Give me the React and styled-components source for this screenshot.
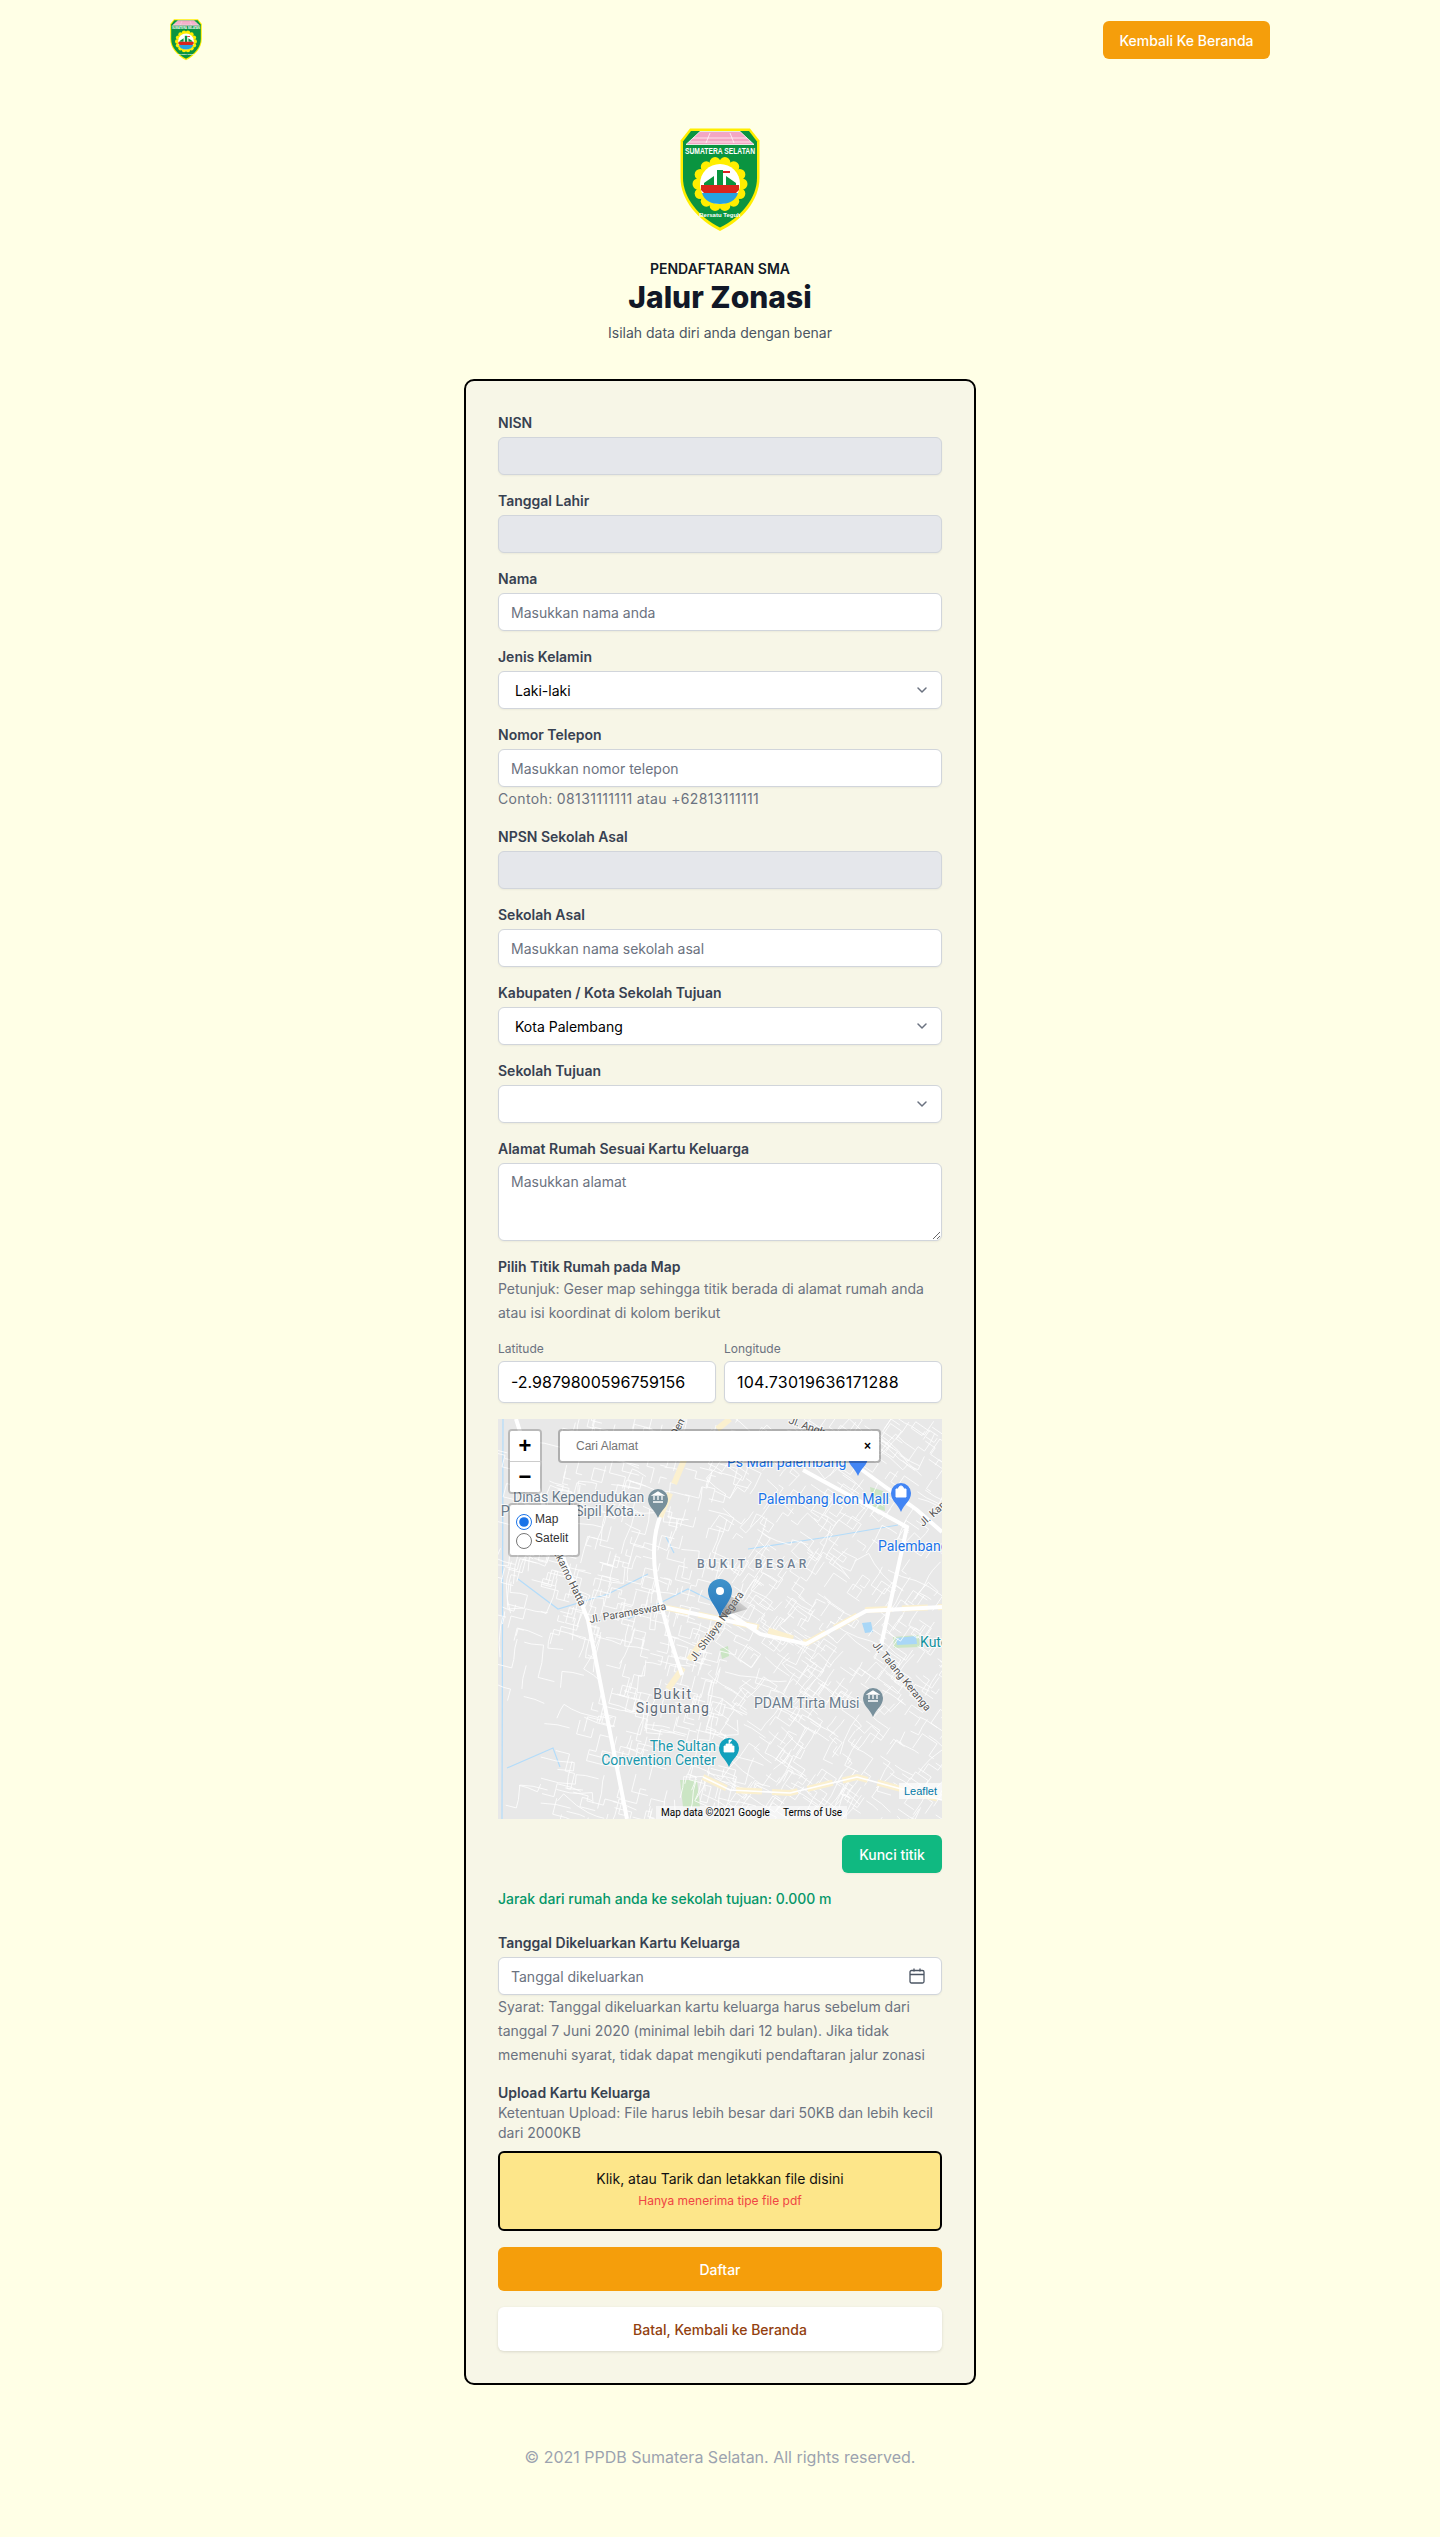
import React from 'react'
import styled, { createGlobalStyle } from 'styled-components'

const GlobalStyle = createGlobalStyle`
  * { box-sizing: border-box; }
  body {
    margin: 0;
    background: #ffffe6;
    font-family: Inter, "Noto Sans", sans-serif;
    color: #111827;
  }
  input, select, textarea, button { font-family: inherit; }
`

const Page = styled.div`
  min-height: 2537px;
  display: flex;
  flex-direction: column;
  align-items: center;
`

const Nav = styled.header`
  width: 1100px;
  height: 80px;
  display: flex;
  align-items: center;
  justify-content: space-between;
`

const NavButton = styled.a`
  width: 167px;
  height: 38px;
  display: flex;
  align-items: center;
  justify-content: center;
  border-radius: 6px;
  background: #f59e0b;
  color: #fff;
  font-size: 14px;
  font-weight: 500;
`

const Hero = styled.div`
  padding-top: 48px;
  display: flex;
  flex-direction: column;
  align-items: center;
  text-align: center;
`

const Eyebrow = styled.div`
  margin-top: 28px;
  font-size: 14px;
  line-height: 20px;
  font-weight: 600;
  color: #111827;
`

const Title = styled.h1`
  margin: 0;
  font-size: 30px;
  line-height: 36px;
  font-weight: 800;
  color: #111827;
`

const Subtitle = styled.p`
  margin: 8px 0 0;
  font-size: 14px;
  line-height: 20px;
  color: #4b5563;
`

const Card = styled.form`
  width: 512px;
  margin-top: 36px;
  padding: 32px;
  display: flex;
  flex-direction: column;
  gap: 16px;
  background: #f7f6e7;
  border: 2px solid #000;
  border-radius: 10px;
`

const Field = styled.div`
  display: flex;
  flex-direction: column;
`

const Label = styled.label`
  margin-bottom: ${(p) => (p.$flush ? '0' : '4px')};
  font-size: 14px;
  line-height: 20px;
  font-weight: 600;
  color: #374151;
`

const Hint = styled.p`
  margin: 0;
  font-size: 14px;
  line-height: ${(p) => (p.$tight ? '20px' : '24px')};
  letter-spacing: ${(p) => (p.$digits ? '0.36px' : 'normal')};
  color: #6b7280;
`

const Input = styled.input`
  width: 100%;
  height: ${(p) => (p.$large ? '42px' : '38px')};
  padding: 0 12px;
  background: ${(p) => (p.disabled ? '#e5e7eb' : '#fff')};
  border: 1px solid #d1d5db;
  border-radius: 6px;
  box-shadow: 0 1px 2px rgba(0, 0, 0, 0.05);
  font-size: ${(p) => (p.$large ? '16px' : '14px')};
  letter-spacing: ${(p) => (p.$spread ? '0.25px' : 'normal')};
  color: #000;
  &::placeholder { color: #6b7280; opacity: 1; }
`

const TextArea = styled.textarea`
  display: block;
  width: 100%;
  height: 78px;
  padding: 8px 12px;
  background: #fff;
  border: 1px solid #d1d5db;
  border-radius: 6px;
  box-shadow: 0 1px 2px rgba(0, 0, 0, 0.05);
  font-size: 14px;
  line-height: 20px;
  &::placeholder { color: #6b7280; opacity: 1; }
`

const SelectWrap = styled.div`
  position: relative;
  svg {
    position: absolute;
    top: 9px;
    right: 10px;
    pointer-events: none;
  }
`

const DateWrap = styled(SelectWrap)`
  svg { right: 17px; top: 11px; }
`

const Select = styled.select`
  width: 100%;
  height: 38px;
  padding: 0 16px;
  appearance: none;
  background: #fff;
  border: 1px solid #d1d5db;
  border-radius: 6px;
  box-shadow: 0 1px 2px rgba(0, 0, 0, 0.05);
  font-size: 14px;
  color: #000;
`

const CoordGrid = styled.div`
  margin-top: 16px;
  display: grid;
  grid-template-columns: 1fr 1fr;
  gap: 8px;
`

const SmallLabel = styled.label`
  display: block;
  margin-bottom: 4px;
  font-size: 12px;
  line-height: 16px;
  color: #6b7280;
`

const MapFrame = styled.div`
  position: relative;
  height: 400px;
  overflow: hidden;
  background: #e8e8e8;
  svg { display: block; }
`

const ZoomBar = styled.div`
  position: absolute;
  top: 10px;
  left: 10px;
  width: 34px;
  border: 2px solid rgba(0, 0, 0, 0.2);
  border-radius: 4px;
  background-clip: padding-box;
`

const ZoomButton = styled.a`
  display: block;
  height: ${(p) => (p.$first ? '31px' : '30px')};
  background: #fff;
  border-bottom: ${(p) => (p.$first ? '1px solid #ccc' : 'none')};
  border-radius: ${(p) => (p.$first ? '2px 2px 0 0' : '0 0 2px 2px')};
  text-align: center;
  font: bold 22px/30px "Liberation Sans", sans-serif;
  color: #000;
`

const SearchBox = styled.div`
  position: absolute;
  top: 10px;
  left: 60px;
  width: 323px;
  height: 34px;
  padding: 0 8px 0 16px;
  display: flex;
  align-items: center;
  justify-content: space-between;
  background: #fff;
  border: 2px solid rgba(0, 0, 0, 0.25);
  border-radius: 4px;
  background-clip: padding-box;
  font: 12px "Liberation Sans", sans-serif;
  color: #757575;
`

const SearchClear = styled.span`
  font-weight: bold;
  font-size: 12px;
  color: #000;
`

const LayerBox = styled.div`
  position: absolute;
  top: 84px;
  left: 10px;
  width: 72px;
  height: 54px;
  padding: 9px 0 0 6px;
  display: flex;
  flex-direction: column;
  gap: 3px;
  background: #fff;
  border: 2px solid rgba(0, 0, 0, 0.2);
  border-radius: 4px;
  background-clip: padding-box;
  font: 12px/14px "Liberation Sans", sans-serif;
  color: #333;
`

const LayerOption = styled.label`
  height: 16px;
  display: flex;
  align-items: flex-start;
  gap: 3px;
  input {
    width: 16px;
    height: 16px;
    margin: 0;
    accent-color: #1a73e8;
  }
  span { margin-top: -2px; }
`

const Attribution = styled.div`
  position: absolute;
  right: 0;
  bottom: 20px;
  height: 16px;
  padding: 0 5px;
  background: rgba(255, 255, 255, 0.7);
  font: 11px/16px "Liberation Sans", sans-serif;
  color: #0078a8;
`

const MapCredit = styled.div`
  position: absolute;
  left: 158px;
  bottom: 0;
  width: 191px;
  height: 13px;
  padding-left: 5px;
  display: flex;
  gap: 13px;
  background: rgba(255, 255, 255, 0.55);
  font: 10px/13px Roboto, sans-serif;
  color: #000;
`

const ButtonRow = styled.div`
  display: flex;
  justify-content: flex-end;
`

const LockButton = styled.button`
  width: 100px;
  height: 38px;
  border: none;
  border-radius: 6px;
  background: #10b981;
  box-shadow: 0 1px 2px rgba(0, 0, 0, 0.05);
  color: #fff;
  font-size: 14px;
  font-weight: 500;
`

const Distance = styled.p`
  margin: 0 0 8px;
  font-size: 14px;
  line-height: 20px;
  font-weight: 500;
  color: #059669;
`

const DropZone = styled.div`
  height: 80px;
  margin-top: 8px;
  padding-top: 16px;
  display: flex;
  flex-direction: column;
  align-items: center;
  gap: 4px;
  background: #fde68a;
  border: 2px solid #000;
  border-radius: 6px;
`

const DropTitle = styled.span`
  font-size: 14px;
  line-height: 20px;
  color: #111;
`

const DropNote = styled.span`
  font-size: 12px;
  line-height: 16px;
  color: #ef4444;
`

const ActionButton = styled.button`
  height: 44px;
  border: none;
  border-radius: 6px;
  background: ${(p) => (p.$primary ? '#f59e0b' : '#fff')};
  color: ${(p) => (p.$primary ? '#fff' : '#92400e')};
  box-shadow: ${(p) => (p.$primary ? 'none' : '0 1px 3px rgba(0, 0, 0, 0.12)')};
  font-size: 14px;
  font-weight: 500;
`

const Footer = styled.footer`
  margin-top: 60px;
  font-size: 16px;
  line-height: 24px;
  color: #9ca3af;
`

const Chevron = () => (
  <svg width="20" height="20" viewBox="0 0 20 20" fill="none" stroke="#6b7280" strokeWidth="1.5" strokeLinecap="round" strokeLinejoin="round">
    <path d="M6 8l4 4 4-4" />
  </svg>
)

const CalendarIcon = () => (
  <svg width="16" height="16" viewBox="0 0 16 16" fill="none" stroke="#4b5563" strokeWidth="1.3">
    <rect x="1" y="2.500" width="14" height="12.500" rx="1.500" />
    <path d="M1 6.500h14M5 .5v3M11 .5v3" />
  </svg>
)

const Logo = ({ size }) => {
  const teeth = Array.from({ length: 14 }, (_, i) => {
    const a = (i / 14) * Math.PI * 2
    return <circle key={i} cx={40 + Math.cos(a) * 22} cy={56 + Math.sin(a) * 22} r="5.500" fill="#ffee00" />
  })
  return (
    <svg width={size} height={(size * 103) / 80} viewBox="0 0 80 103">
      <path d="M10 .5h60l9.500 12V50c0 22-17 42-39.500 53C18 92 .5 72 .5 50V12.500z" fill="#ffee00" />
      <path d="M11 3h58l8 10.500V50c0 20-16 39-37 49.500C19 89 3 70 3 50V13.500z" fill="#0a9440" />
      <path d="M20 3.500h40l14 13H6z" fill="#f3a6c4" stroke="#fff" strokeWidth=".8" />
      <path d="M13 10h54M9 14h62M30 5l-4 10M50 5l4 10" stroke="#fff" strokeWidth=".7" />
      <text x="5" y="26" textLength="70" lengthAdjust="spacingAndGlyphs" fontFamily="Liberation Sans, sans-serif" fontSize="9" fontWeight="700" fill="#fff">SUMATERA SELATAN</text>
      {teeth}
      <circle cx="40" cy="56" r="20" fill="#fff" />
      <path d="M24 55l10-7v9H24zM56 55l-10-7v9h10z" fill="#0a9440" />
      <rect x="37" y="42" width="6" height="24" fill="#0a9440" />
      <path d="M43 43h7v2h-7z" fill="#d22" />
      <path d="M21 57h38v5l-3 3H24l-3-3z" fill="#d9261c" />
      <path d="M22 65h36c-2 8-10 11-18 11s-16-3-18-11z" fill="#27a3df" />
      <text x="40" y="89" textAnchor="middle" fontFamily="Liberation Sans, sans-serif" fontSize="6" fontWeight="700" fill="#fff">Bersatu Teguh</text>
    </svg>
  )
}

// small side streets, seeded so the picture stays the same on every render
const buildStreets = () => {
  let seed = 4217
  const rnd = () => {
    seed = (seed * 16807) % 2147483647
    return seed / 2147483647
  }
  let d = ''
  for (let i = 0; i < 760; i++) {
    let x = rnd() * 444
    let y = rnd() * 400
    if (x < 90 && y > 220 && rnd() > 0.35) continue
    let a = Math.floor(rnd() * 4) * (Math.PI / 2) + 0.35 + (x > 230 ? 0.25 : -0.1)
    d += `M${x.toFixed(1)} ${y.toFixed(1)}`
    const steps = 2 + Math.floor(rnd() * 4)
    for (let s = 0; s < steps; s++) {
      const len = 5 + rnd() * 13
      x += Math.cos(a) * len
      y += Math.sin(a) * len
      d += `L${x.toFixed(1)} ${y.toFixed(1)}`
      a += (rnd() > 0.5 ? 1 : -1) * (Math.PI / 2) * (rnd() > 0.35 ? 1 : 0.1)
    }
  }
  return d
}

const Pin = ({ x, tip, color, children }) => (
  <g transform={`translate(${x} ${tip - 29})`}>
    <path d="M0 29C-3 21-10 18-10 10a10 10 0 0 1 20 0c0 8-7 11-10 19z" fill={color} />
    {children}
  </g>
)

const MapLabel = styled.text`
  font-family: Roboto, sans-serif;
  font-size: ${(p) => p.$size || 14}px;
  font-weight: ${(p) => p.$weight || 400};
  letter-spacing: ${(p) => p.$spacing || 0}px;
  fill: ${(p) => p.$color || '#6b7c8c'};
  paint-order: stroke;
  stroke: rgba(255, 255, 255, 0.75);
  stroke-width: 2px;
`

const MapDrawing = () => {
  const streets = React.useMemo(buildStreets, [])
  return (
    <svg width="444" height="400" viewBox="0 0 444 400">
      <defs>
        <linearGradient id="pinBlue" x1="0" y1="0" x2="0" y2="1">
          <stop offset="0" stopColor="#3f93cb" />
          <stop offset="1" stopColor="#2a78bc" />
        </linearGradient>
        <linearGradient id="pinShade" x1="0" y1="1" x2="1" y2="0">
          <stop offset="0" stopColor="#555" stopOpacity=".75" />
          <stop offset="1" stopColor="#888" stopOpacity="0" />
        </linearGradient>
      </defs>
      <rect width="444" height="400" fill="#e8e8e8" />
      <path d="M182 361h17l3 27h-17zM372 68l13 4 2 20-12-4zM222 230l8-3 1 10-7 3zM395 218l26-2 1 12-26 1z" fill="#cbe5c4" />
      <path d="M364 204l9-1 2 10-8 1zM398 219l20-2 1 8-20 1z" fill="#a9d7f7" />
      <path d="M5 0l-1 400M9 349l46-20 7 19M20 160l40 30 50-15 40-20M130 200l60-30 40 20M250 130l80-12 70-12M168 118l8 16" stroke="#b3dcfa" strokeWidth="1.200" fill="none" />
      <path d={streets} stroke="#fff" strokeWidth=".9" fill="none" opacity=".9" />
      <path d="M165 188l94 20 50 16 60-33 75-3M205 358l27 13 60 3 67-16 85 23M162 98l27-64 43-34M170 270l30-42 30-34" stroke="#fbf0cf" strokeWidth="6" strokeDasharray="26 10" fill="none" />
      <path d="M18 0l32 100 40 101 39 199M162 98c-12 32-7 72 22 158M305 51l104 57-27 123M360 48l59 43 25 22M232 195l30 20 46 10 60-33 76-4M165 188l94 20" stroke="#fff" strokeWidth="4" fill="none" />
      <path d="M205 358l27 13 60 3 67-16 85 23" stroke="#fff" strokeWidth="1.600" fill="none" />

      <MapLabel x="15" y="83">Dinas Kependudukan</MapLabel>
      <MapLabel x="147" y="97" textAnchor="end">dan Pencatatan Sipil Kota...</MapLabel>
      <Pin x={160} tip={99} color="#78909c">
        <path d="M-5 13h10M-4 11V7M0 11V7M4 11V7M-5 6l5-3 5 3z" stroke="#fff" strokeWidth="1.300" fill="#fff" />
      </Pin>
      <MapLabel x="229" y="48" $color="#1a73e8">Ps Mall palembang</MapLabel>
      <Pin x={360} tip={57} color="#4285f4" />
      <MapLabel x="260" y="85" $color="#1a73e8">Palembang Icon Mall</MapLabel>
      <Pin x={403} tip={93} color="#4285f4">
        <path d="M-5 6h10v8H-5zM-2.500 6c0-4 5-4 5 0" fill="#fff" stroke="#fff" strokeWidth="1" />
      </Pin>
      <MapLabel x="380" y="132" $color="#1a73e8">Palembang</MapLabel>
      <MapLabel x="199" y="149" $size={12} $weight={500} $spacing={3.6} $color="#6f7f92">BUKIT BESAR</MapLabel>
      <MapLabel $size={10.500} $color="#555" transform="translate(92 204) rotate(-10)">Jl. Parameswara</MapLabel>
      <MapLabel $size={10.500} $color="#555" transform="translate(44 110) rotate(64)">Jl. Soekarno Hatta</MapLabel>
      <MapLabel $size={10.500} $color="#555" transform="translate(197 243) rotate(-54)">Jl. Shijaya Negara</MapLabel>
      <MapLabel $size={10.500} $color="#555" transform="translate(374 226) rotate(51)">Jl. Talang Keranga</MapLabel>
      <MapLabel $size={10.500} $color="#555" transform="translate(172 30) rotate(-62)">Jl. Demang</MapLabel>
      <MapLabel $size={10.500} $color="#555" transform="translate(425 108) rotate(-42)">Jl. Kap</MapLabel>
      <MapLabel $size={10.500} $color="#555" transform="translate(290 4) rotate(20)">Jl. Angkatan</MapLabel>
      <MapLabel x="422" y="228" $color="#12939e">Kuto</MapLabel>
      <MapLabel x="175" y="280" textAnchor="middle" $spacing={1.6} $color="#5f6b78">Bukit</MapLabel>
      <MapLabel x="175" y="294" textAnchor="middle" $spacing={1.3} $color="#5f6b78">Siguntang</MapLabel>
      <MapLabel x="256" y="289">PDAM Tirta Musi</MapLabel>
      <Pin x={375} tip={298} color="#78909c">
        <path d="M-5 13h10M-4 11V7M0 11V7M4 11V7M-5 6l5-3 5 3z" stroke="#fff" strokeWidth="1.300" fill="#fff" />
      </Pin>
      <MapLabel x="218" y="332" textAnchor="end" $color="#1a98ac">The Sultan</MapLabel>
      <MapLabel x="218" y="346" textAnchor="end" $color="#1a98ac">Convention Center</MapLabel>
      <Pin x={231} tip={348} color="#12a0bc">
        <path d="M-5 14V8h2V6h6v2h2v6zM0 6V2h3" fill="#fff" stroke="#fff" strokeWidth=".8" />
      </Pin>

      <path d="M222 198l10-22 18 14z" fill="url(#pinShade)" />
      <path d="M222 198c-3-10-12-17-12-26a12 12 0 0 1 24 0c0 9-9 16-12 26z" fill="url(#pinBlue)" />
      <circle cx="222" cy="172" r="4" fill="#fff" />
    </svg>
  )
}

const TextField = ({ label, placeholder, disabled, hint }) => (
  <Field>
    <Label>{label}</Label>
    <Input disabled={disabled} placeholder={placeholder} />
    {hint && <Hint $digits>{hint}</Hint>}
  </Field>
)

const SelectField = ({ label, value }) => (
  <Field>
    <Label>{label}</Label>
    <SelectWrap>
      <Select defaultValue={value}>
        <option value={value}>{value}</option>
      </Select>
      <Chevron />
    </SelectWrap>
  </Field>
)

const App = () => {
  return (
    <Page>
      <GlobalStyle />
      <Nav>
        <Logo size={32} />
        <NavButton>Kembali Ke Beranda</NavButton>
      </Nav>

      <Hero>
        <Logo size={80} />
        <Eyebrow>PENDAFTARAN SMA</Eyebrow>
        <Title>Jalur Zonasi</Title>
        <Subtitle>Isilah data diri anda dengan benar</Subtitle>
      </Hero>

      <Card>
        <TextField label="NISN" disabled />
        <TextField label="Tanggal Lahir" disabled />
        <TextField label="Nama" placeholder="Masukkan nama anda" />
        <SelectField label="Jenis Kelamin" value="Laki-laki" />
        <TextField label="Nomor Telepon" placeholder="Masukkan nomor telepon" hint="Contoh: 08131111111 atau +62813111111" />
        <TextField label="NPSN Sekolah Asal" disabled />
        <TextField label="Sekolah Asal" placeholder="Masukkan nama sekolah asal" />
        <SelectField label="Kabupaten / Kota Sekolah Tujuan" value="Kota Palembang" />
        <SelectField label="Sekolah Tujuan" value="" />
        <Field>
          <Label>Alamat Rumah Sesuai Kartu Keluarga</Label>
          <TextArea placeholder="Masukkan alamat" />
        </Field>

        <Field>
          <Label $flush>Pilih Titik Rumah pada Map</Label>
          <Hint>Petunjuk: Geser map sehingga titik berada di alamat rumah anda atau isi koordinat di kolom berikut</Hint>
          <CoordGrid>
            <div>
              <SmallLabel>Latitude</SmallLabel>
              <Input $large defaultValue="-2.9879800596759156" />
            </div>
            <div>
              <SmallLabel>Longitude</SmallLabel>
              <Input $large $spread defaultValue="104.73019636171288" />
            </div>
          </CoordGrid>
        </Field>

        <MapFrame>
          <MapDrawing />
          <ZoomBar>
            <ZoomButton $first>+</ZoomButton>
            <ZoomButton>−</ZoomButton>
          </ZoomBar>
          <SearchBox>
            Cari Alamat
            <SearchClear>×</SearchClear>
          </SearchBox>
          <LayerBox>
            <LayerOption>
              <input type="radio" name="layer" defaultChecked />
              <span>Map</span>
            </LayerOption>
            <LayerOption>
              <input type="radio" name="layer" />
              <span>Satelit</span>
            </LayerOption>
          </LayerBox>
          <Attribution>Leaflet</Attribution>
          <MapCredit>
            <span>Map data ©2021 Google</span>
            <span>Terms of Use</span>
          </MapCredit>
        </MapFrame>

        <ButtonRow>
          <LockButton type="button">Kunci titik</LockButton>
        </ButtonRow>
        <Distance>Jarak dari rumah anda ke sekolah tujuan: 0.000 m</Distance>

        <Field>
          <Label>Tanggal Dikeluarkan Kartu Keluarga</Label>
          <DateWrap>
            <Input placeholder="Tanggal dikeluarkan" />
            <CalendarIcon />
          </DateWrap>
          <Hint>Syarat: Tanggal dikeluarkan kartu keluarga harus sebelum dari tanggal 7 Juni 2020 (minimal lebih dari 12 bulan). Jika tidak memenuhi syarat, tidak dapat mengikuti pendaftaran jalur zonasi</Hint>
        </Field>

        <Field>
          <Label $flush>Upload Kartu Keluarga</Label>
          <Hint $tight>Ketentuan Upload: File harus lebih besar dari 50KB dan lebih kecil dari 2000KB</Hint>
          <DropZone>
            <DropTitle>Klik, atau Tarik dan letakkan file disini</DropTitle>
            <DropNote>Hanya menerima tipe file pdf</DropNote>
          </DropZone>
        </Field>

        <ActionButton type="button" $primary>Daftar</ActionButton>
        <ActionButton type="button">Batal, Kembali ke Beranda</ActionButton>
      </Card>

      <Footer>© 2021 PPDB Sumatera Selatan. All rights reserved.</Footer>
    </Page>
  )
}

export default App
